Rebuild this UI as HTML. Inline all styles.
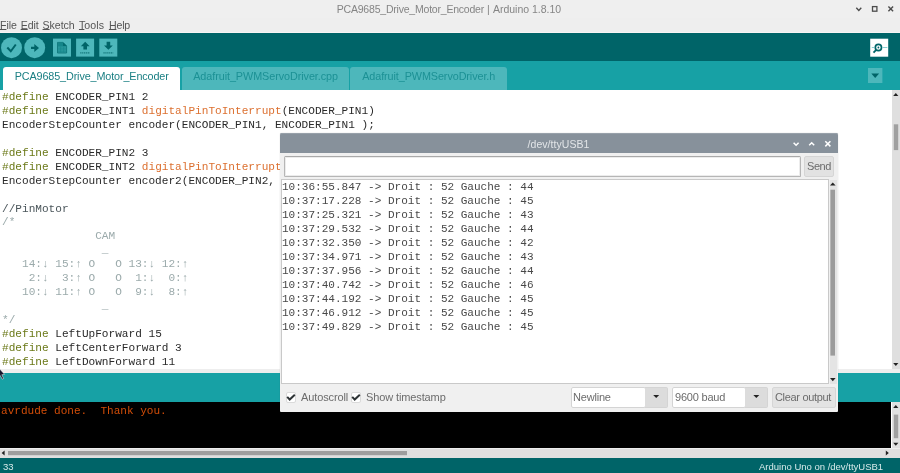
<!DOCTYPE html>
<html>
<head>
<meta charset="utf-8">
<title>PCA9685_Drive_Motor_Encoder | Arduino 1.8.10</title>
<style>
*{box-sizing:border-box;margin:0;padding:0}
html,body{width:900px;height:473px;overflow:hidden;background:#fff}
body{position:relative;font-family:"Liberation Sans",sans-serif;font-size:11px;color:#222}
.abs{position:absolute}
pre,#title,#menu,.tab,#status span,#smtitle,#smsend,.lbl{will-change:transform}
svg{position:absolute;overflow:visible}
#titlebar{left:0;top:0;width:900px;height:18px;background:#efefef}
#title{left:-1.4px;top:3px;width:900px;text-align:center;font-size:10.5px;color:#858585;line-height:13px;letter-spacing:-0.1px}
#menubar{left:0;top:18px;width:900px;height:15px;background:#eeeeee;border-bottom:1px solid #f6f4f4}
#menu{left:-0.5px;top:18.3px;font-size:10.6px;line-height:14px;color:#555;white-space:pre;letter-spacing:-0.05px;word-spacing:0.9px}
#menu u{text-decoration:underline;text-underline-offset:0.3px;text-decoration-thickness:0.9px}
#toolbar{left:0;top:33px;width:900px;height:28px;background:#006468}
#tabbar{left:0;top:61px;width:900px;height:29px;background:#17a1a5}
.tab{top:66.7px;height:23.3px;font-size:10.8px;line-height:18px;text-align:center;color:#1a7f83;letter-spacing:-0.12px}
.tab.on{background:#fff;border-radius:3px 3px 0 0}
.tab.off{background:#4db7bb;color:#1c9195;border-radius:3px 3px 0 0}
#editor{left:0;top:90px;width:891px;height:283px;background:#fff;overflow:hidden}
pre{font-family:"Liberation Mono",monospace;font-size:11.1px;line-height:13.93px;white-space:pre}
#code{left:1.5px;top:91.3px;color:#2a2a2a}
.k{color:#6b7918}.f{color:#dc7030}.c{color:#9baaab}.c2{color:#4a555a}
#vscroll{left:891.5px;top:90px;width:8.5px;height:280px;background:#dfdfdf}
#divider{left:0;top:369px;width:900px;height:4px;background:#eeeeee}
#midbar{left:0;top:373px;width:900px;height:29px;background:#17a1a5}
#console{left:0;top:402px;width:891px;height:46px;background:#000}
#context{left:0.6px;top:405px;color:#d24d08;font-size:11.06px}
#cvscroll{left:891.5px;top:402px;width:8.5px;height:46px;background:#dfdfdf}
#hscroll{left:0;top:448px;width:900px;height:9.5px;background:#dfdfdf;border-top:1px solid #ededed}
#status{left:0;top:457.5px;width:900px;height:15.5px;background:#006468}
#status span{position:absolute;color:#d6eaea;font-size:9.5px;line-height:12px;top:3.5px}
/* serial monitor */
#sm{left:280px;top:133px;width:558px;height:278.6px;background:#f0f0f0;border-radius:2px 2px 1px 1px;box-shadow:0 0 1px rgba(0,0,0,.3)}
#smtitle{left:0;top:0;width:558px;height:19.7px;background:#87919b;box-shadow:inset 0 1px 0 #98a1aa;border-radius:2px 2px 0 0;color:#e2e5e8;text-align:center;font-size:10.5px;line-height:22px;letter-spacing:0.05px;padding-right:1px}
#sminput{left:4px;top:23px;width:516.5px;height:20.7px;background:#fff;border:1px solid #b6b6b6;border-top-color:#a9a9a9;border-radius:1.5px;box-shadow:inset 0 0 0 1px #ececec}
#smsend{left:524px;top:23px;width:30px;height:20.7px;background:#e2e2e2;border:1px solid #d5d5d5;border-radius:2px;font-size:11px;line-height:19px;text-align:center;color:#6c6c6c;letter-spacing:-0.45px}
#smtext{left:1px;top:46.2px;width:548.4px;height:205px;background:#fff;border:1px solid #c9c9c9}
#smpre{left:2px;top:48px;color:#484848;font-size:11.04px;line-height:13.97px}
#smvs{left:549.5px;top:47px;width:7px;height:203.5px;background:#e4e4e4}
.lbl{font-size:11px;color:#6c6c6c;line-height:14px;letter-spacing:-0.12px;white-space:pre}
.cb{width:9.8px;height:10.4px;background:#fff;border:1px solid #dadada;border-radius:2px}
.sel{top:254px;height:21px;background:#fff;border:1px solid #d4d4d4;border-radius:2px}
.selb{top:254px;height:21px;width:22.3px;background:#dcdcdc;border:1px solid #d4d4d4;border-left:0;border-radius:0 2px 2px 0}
.btn{background:#4db7bb}
</style>
</head>
<body>
<div id="titlebar" class="abs"></div>
<div id="title" class="abs"><span style="letter-spacing:-0.21px">PCA9685_Drive_Motor_Encoder</span><span style="letter-spacing:0.1px"> | </span><span style="letter-spacing:0">Arduino 1.8.10</span></div>
<svg style="left:850px;top:0" width="50" height="18" viewBox="850 0 50 18"><g fill="none" stroke="#4c4c4c" stroke-width="1.4"><path d="M856.3 7.8 L858.8 10.4 L861.3 7.8"/><rect x="872.5" y="6.6" width="4.4" height="4.6" stroke-width="1.3"/><path d="M888.4 6.6 L893.1 11.3 M893.1 6.6 L888.4 11.3"/></g></svg>
<div id="menubar" class="abs"></div>
<div id="menu" class="abs"><u>F</u>ile <u>E</u>dit <u>S</u>ketch <span style="margin-left:0.5px;letter-spacing:0.1px"><u>T</u>ools</span> <span style="margin-left:0.9px;letter-spacing:-0.15px"><u>H</u>elp</span></div>
<div id="toolbar" class="abs"></div>
<!-- toolbar buttons -->
<svg style="left:0;top:33px" width="125" height="28" viewBox="0 33 125 28">
  <circle cx="11.5" cy="47.7" r="10.5" fill="#4db7bb"/>
  <circle cx="34.7" cy="47.7" r="10.5" fill="#4db7bb"/>
  <rect x="53" y="38.6" width="18" height="18" fill="#4db7bb"/>
  <rect x="76.1" y="38.6" width="18" height="18" fill="#4db7bb"/>
  <rect x="99.3" y="38.6" width="18" height="18" fill="#4db7bb"/>
  <path d="M7.3 47.5 L10.8 51.3 L15.8 44.5" fill="none" stroke="#006468" stroke-width="2"/>
  <path d="M31 46.8 H34.3 V43.9 L39 47.95 L34.3 52 V49.1 H31 Z" fill="#006468"/>
  <path d="M57.5 42.4 H63 L66.6 46 V53 H57.5 Z" fill="#2c9a9e" stroke="#0d777b" stroke-width="0.9"/>
  <path d="M57.9 42.8 H63 V46 H66.2 V46.6 H57.9 Z" fill="#15868a"/>
  <path d="M63 42.2 V46.1 H66.9 Z" fill="#046b6f"/>
  <path d="M58 48.2 H66.2 M58 49.9 H66.2 M58 51.6 H66.2 M60.6 46.6 V52.6 M63.6 46.6 V52.6" stroke="#16888c" stroke-width="0.6" fill="none"/>
  <path d="M85.2 41.7 L89.6 46.3 H87 V49.6 H83.4 V46.3 H80.8 Z" fill="#006468"/>
  <path d="M80.2 52.9 H90" stroke="#006468" stroke-width="1.2" stroke-dasharray="1.3 0.6" opacity=".75"/>
  <path d="M108.4 49.7 L112.8 45.4 H110.2 V41.8 H106.6 V45.4 H104 Z" fill="#006468"/>
  <path d="M103.4 52.9 H113.2" stroke="#006468" stroke-width="1.2" stroke-dasharray="1.3 0.6" opacity=".75"/>
</svg>
<!-- serial monitor button -->
<svg style="left:865px;top:33px" width="35" height="28" viewBox="865 33 35 28">
  <rect x="870.2" y="38.7" width="18" height="18" fill="#fff"/>
  <circle cx="878.4" cy="47.5" r="3.1" fill="none" stroke="#006468" stroke-width="1.7"/>
  <circle cx="878.4" cy="47.5" r="0.9" fill="#006468"/>
  <path d="M876.2 49.9 L873.5 52.6" stroke="#006468" stroke-width="1.9"/>
  <path d="M882.6 47.5 H887.4 M871.8 47.5 H874.4" stroke="#6cc4c7" stroke-width="0.8"/>
</svg>
<div id="tabbar" class="abs"></div>
<div class="abs tab on" style="left:3.3px;width:177.4px">PCA9685_Drive_Motor_Encoder</div>
<div class="abs tab off" style="left:181.6px;width:167.2px;letter-spacing:-0.06px">Adafruit_PWMServoDriver.cpp</div>
<div class="abs tab off" style="left:350.4px;width:157.4px;letter-spacing:-0.08px">Adafruit_PWMServoDriver.h</div>
<svg style="left:865px;top:61px" width="35" height="29" viewBox="865 61 35 29">
  <rect x="868" y="68" width="14.4" height="15" fill="#4db7bb"/>
  <path d="M871.3 73.5 H879.1 L875.2 77.9 Z" fill="#006468"/>
</svg>
<div id="editor" class="abs"></div>
<pre id="code" class="abs"><span class="k">#define</span> ENCODER_PIN1 2
<span class="k">#define</span> ENCODER_INT1 <span class="f">digitalPinToInterrupt</span>(ENCODER_PIN1)
EncoderStepCounter encoder(ENCODER_PIN1, ENCODER_PIN1 );

<span class="k">#define</span> ENCODER_PIN2 3
<span class="k">#define</span> ENCODER_INT2 <span class="f">digitalPinToInterrupt</span>(ENCODER_PIN2)
EncoderStepCounter encoder2(ENCODER_PIN2, ENCODER_PIN2 );

<span class="c2">//PinMotor</span>
<span class="c">/*
              CAM
               _
   14:&#8595; 15:&#8593; O   O 13:&#8595; 12:&#8593;
    2:&#8595;  3:&#8593; O   O  1:&#8595;  0:&#8593;
   10:&#8595; 11:&#8593; O   O  9:&#8595;  8:&#8593;
               _
*/</span>
<span class="k">#define</span> LeftUpForward 15
<span class="k">#define</span> LeftCenterForward 3
<span class="k">#define</span> LeftDownForward 11
</pre>
<div id="vscroll" class="abs"></div>
<svg style="left:890px;top:90px" width="10" height="283" viewBox="890 90 10 283">
  <path d="M893.2 96 L895.8 93 L898.4 96 Z" fill="#222"/>
  <rect x="893.8" y="124.3" width="4.4" height="25.8" fill="#a0a0a0"/>
  <path d="M893.2 363 L895.8 366 L898.4 363 Z" fill="#222"/>
</svg>
<div id="divider" class="abs"></div>
<div id="midbar" class="abs"></div>
<div id="console" class="abs"></div>
<pre id="context" class="abs">avrdude done.  Thank you.</pre>
<div id="cvscroll" class="abs"></div>
<svg style="left:890px;top:402px" width="10" height="46" viewBox="890 402 10 46">
  <path d="M893.2 408 L895.8 405 L898.4 408 Z" fill="#222"/>
  <rect x="893.8" y="414.6" width="4.4" height="23.6" fill="#a0a0a0"/>
  <path d="M893.2 442.8 L895.8 445.8 L898.4 442.8 Z" fill="#222"/>
</svg>
<div id="hscroll" class="abs"></div>
<svg style="left:0;top:448px" width="900" height="10" viewBox="0 448 900 10">
  <path d="M4.6 450.4 L1.6 452.9 L4.6 455.4 Z" fill="#222"/>
  <rect x="8" y="451" width="399" height="4.2" fill="#9e9e9e"/>
  <path d="M885.8 450.4 L888.8 452.9 L885.8 455.4 Z" fill="#222"/>
</svg>
<div id="status" class="abs"><span style="left:3px">33</span><span style="right:16.9px">Arduino Uno on /dev/ttyUSB1</span></div>
<!-- mouse pointer -->
<svg style="left:0;top:366px" width="8" height="14" viewBox="0 366 8 14"><path d="M-2.6 366.4 L-2.6 378 L0.2 375.4 L2.2 379.2 L3.6 378.5 L1.8 374.7 L4.6 374.4 Z" fill="#15152c" stroke="#fff" stroke-width=".5"/></svg>

<div id="sm" class="abs">
  <div id="smtitle" class="abs">/dev/ttyUSB1</div>
  <svg style="left:505px;top:0" width="53" height="20" viewBox="785 133 53 20"><g fill="none" stroke="#fff" stroke-width="1.5"><path d="M793.6 142.7 L796.1 145.2 L798.6 142.7"/><path d="M809.2 145.2 L811.7 142.7 L814.2 145.2"/><path d="M825.3 141.3 L830.4 146.4 M830.4 141.3 L825.3 146.4"/></g></svg>
  <div id="sminput" class="abs"></div>
  <div id="smsend" class="abs">Send</div>
  <div id="smtext" class="abs"></div>
  <pre id="smpre" class="abs">10:36:55.847 -&gt; Droit : 52 Gauche : 44
10:37:17.228 -&gt; Droit : 52 Gauche : 45
10:37:25.321 -&gt; Droit : 52 Gauche : 43
10:37:29.532 -&gt; Droit : 52 Gauche : 44
10:37:32.350 -&gt; Droit : 52 Gauche : 42
10:37:34.971 -&gt; Droit : 52 Gauche : 43
10:37:37.956 -&gt; Droit : 52 Gauche : 44
10:37:40.742 -&gt; Droit : 52 Gauche : 46
10:37:44.192 -&gt; Droit : 52 Gauche : 45
10:37:46.912 -&gt; Droit : 52 Gauche : 45
10:37:49.829 -&gt; Droit : 52 Gauche : 45</pre>
  <div id="smvs" class="abs"></div>
  <svg style="left:548px;top:46px" width="10" height="205" viewBox="828 179 10 205">
    <path d="M830 185.6 L832.8 182.5 L835.6 185.6 Z" fill="#222"/>
    <rect x="830.4" y="189.7" width="4.6" height="165.9" fill="#9c9c9c"/>
    <path d="M830 378 L832.8 381.2 L835.6 378 Z" fill="#222"/>
  </svg>
  <div class="abs cb" style="left:5.8px;top:259.2px"></div>
  <svg style="left:5.8px;top:259.2px" width="11" height="11" viewBox="0 0 11 11"><path d="M1.2 4.9 L3.7 7.5 L8.8 2.8" fill="none" stroke="#2e3436" stroke-width="2"/></svg>
  <div class="abs lbl" style="left:21.3px;top:256.9px">Autoscroll</div>
  <div class="abs cb" style="left:71.4px;top:259.2px"></div>
  <svg style="left:71.4px;top:259.2px" width="11" height="11" viewBox="0 0 11 11"><path d="M1.2 4.9 L3.7 7.5 L8.8 2.8" fill="none" stroke="#2e3436" stroke-width="2"/></svg>
  <div class="abs lbl" style="left:86.3px;top:256.9px">Show timestamp</div>
  <div class="abs sel" style="left:291px;width:75.3px"></div>
  <div class="abs selb" style="left:365.3px"></div>
  <svg style="left:365px;top:254px" width="22" height="20" viewBox="0 0 22 20"><path d="M8.2 7.9 H14.2 L11.2 11 Z" fill="#222"/></svg>
  <div class="abs lbl" style="left:293.4px;top:256.9px;letter-spacing:-0.2px">Newline</div>
  <div class="abs sel" style="left:391.7px;width:74.3px"></div>
  <div class="abs selb" style="left:465.3px"></div>
  <svg style="left:465px;top:254px" width="22" height="20" viewBox="0 0 22 20"><path d="M8.3 7.9 H14.3 L11.3 11 Z" fill="#222"/></svg>
  <div class="abs lbl" style="left:394.5px;top:256.9px;letter-spacing:-0.2px">9600 baud</div>
  <div class="abs" style="left:491.7px;top:254px;width:64.3px;height:21px;background:#e3e3e3;border:1px solid #d6d6d6;border-radius:2px"></div>
  <div class="abs lbl" style="left:495.1px;top:256.9px;letter-spacing:-0.32px">Clear output</div>
</div>
</body>
</html>
